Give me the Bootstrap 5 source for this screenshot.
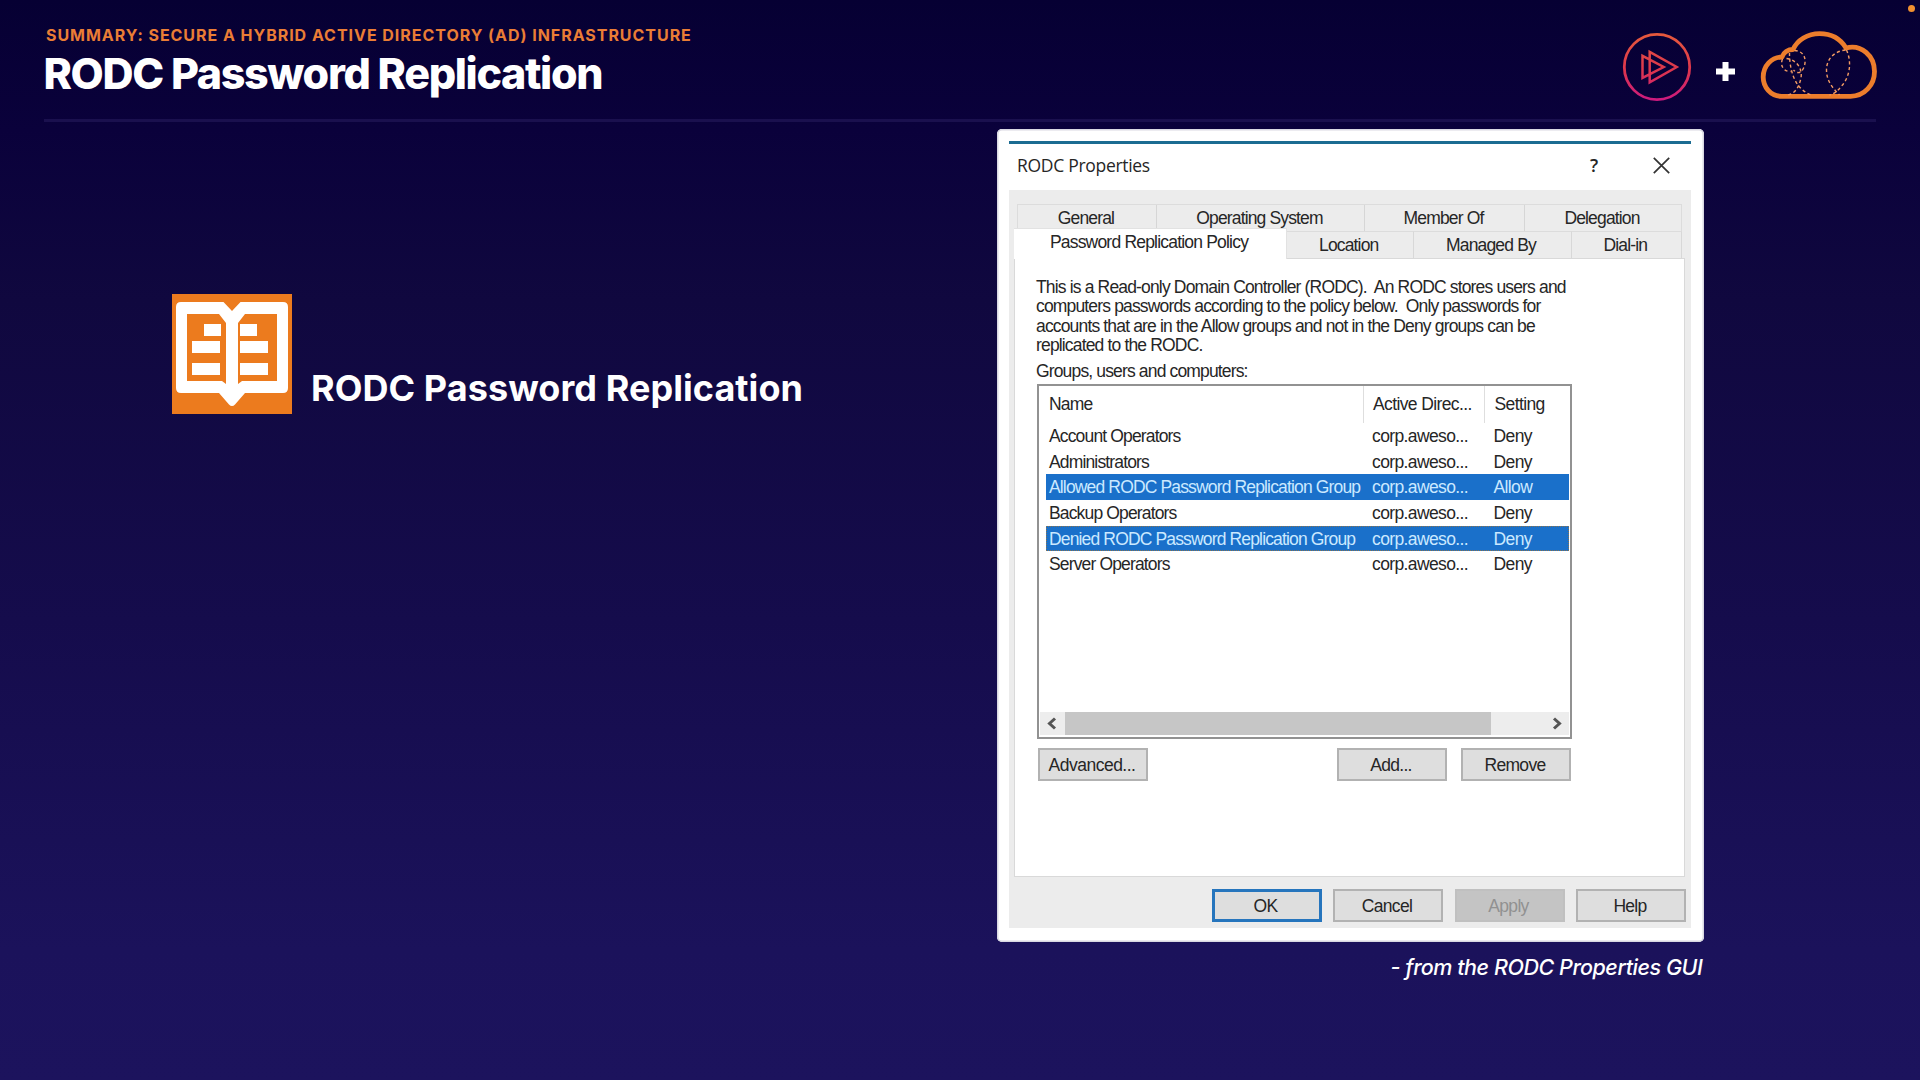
<!DOCTYPE html>
<html lang="en">
<head>
<meta charset="utf-8">
<meta name="viewport" content="width=device-width, initial-scale=1">
<title>RODC Password Replication</title>
<link href="https://cdn.jsdelivr.net/npm/bootstrap@5.3.0/dist/css/bootstrap.min.css" rel="stylesheet">
<style>
  body { margin: 0; background: #1b125b; }
  .slide { width: 1920px; height: 1080px; background: linear-gradient(#060033 0, #0a013b 130px, #10083f 300px, #150c4c 620px, #1b125b 950px, #1c135d 100%); font-family: Inter, "Liberation Sans", sans-serif; color: #fff; }
  .slide-head { height: 122px; margin: 0 44px; padding-top: 25px; border-bottom: 3px solid #1a104e; }
  .eyebrow { font-size: 16px; line-height: 20px; font-weight: 700; letter-spacing: .96px; color: #ea7d35; padding-left: 2px; }
  .slide-title { font-size: 43px; line-height: 48px; font-weight: 800; letter-spacing: -1.35px; margin: 4px 0 0 -.5px; }
  .logo-play { width: 70px; height: 70px; margin-top: 6.5px; }
  .logo-plus { width: 19px; height: 19px; margin: 36.5px 25px 0 24.5px; }
  .logo-cloud { width: 118px; height: 72px; margin-top: 3.5px; margin-right: -2px; }
  .live-dot { top: 4.5px; right: 5px; width: 7px; height: 7px; background: #f09030; border-radius: 50%; }
  .topic { padding: 172px 0 0 172px; width: 996.5px; }
  .topic-icon { width: 120px; height: 120px; background: #ec7b1e; }
  .topic h2 { font-size: 36px; line-height: 44px; font-weight: 700; letter-spacing: .06px; margin: 0 0 4.5px 19px; }
  .shot { width: 707px; margin-top: 6.5px; }
  .dialog-frame { height: 813px; background: #fff; border-radius: 5px; padding: 12.5px 12.5px 13px; box-shadow: inset 0 0 0 1.5px #d9d8e2; font-family: "Liberation Sans", sans-serif; font-size: 17.5px; letter-spacing: -.85px; color: #262626; }
  .titlebar { height: 49px; border-top: 3px solid #1b6c92; padding: 0 21px 3px 8px; font-family: "Open Sans", sans-serif; font-size: 17.5px; letter-spacing: -.3px; }
  .q-mark { font-weight: 600; font-size: 18px; margin-right: 55px; }
  .sheet { height: 738px; background: #ececec; padding: 14px 6px 0 5px; }
  .tabs-back { margin: 0 3px; height: 27px; border: 1px solid #dcdcdc; border-bottom: 0; }
  .tabs-back > div, .tabs-front > div { text-align: center; line-height: 27px; height: 27px; white-space: nowrap; padding-right: 2px; }
  .tabs-back > div + div { border-left: 1px solid #d6d6d6; }
  .tabs-front { height: 27px; margin-right: 3px; }
  .tabs-front > div { border-right: 1px solid #d8d8d8; border-top: 1px solid #dcdcdc; }
  .tabs-front > .tab-on { width: 273px; height: 31px; margin-top: -3px; background: #fff; border-color: #e2e2e2; line-height: 27px; letter-spacing: -.8px; }
  .w-general { width: 138px; } .w-os { width: 208px; } .w-member { width: 160px; } .w-location { width: 126.5px; } .w-managed { width: 158px; }
  .panel { height: 619px; background: #fff; border: 1.5px solid #d9d9d9; padding: 18.5px 0 0 22px; }
  .explain { line-height: 19.6px; white-space: pre; margin: 0 0 0 -1px; letter-spacing: -.84px; }
  .list-label { line-height: 20px; margin: 5.5px 0 0 -1px; letter-spacing: -.85px; }
  .listbox { width: 535px; height: 355px; border: 2px solid #929292; margin-top: 3px; padding: 0 1px 2px 1px; }
  .lrow { display: grid; grid-template-columns: 316.5px 121.5px 1fr; margin-left: 6px; height: 25.55px; line-height: 26.5px; white-space: nowrap; }
  .lrow > span { padding-left: 3px; }
  .lrow > span + span { padding-left: 9.5px; letter-spacing: -.62px; }
  .lhead { height: 37px; line-height: 37px; }
  .lhead > span + span { border-left: 1px solid #dedede; }
  .picked { background: #1a70ca; color: #cbe9ff; }
  .focused { outline: 1px dotted #8a7350; outline-offset: -1px; }
  .hbar { height: 23px; background: #ededed; }
  .hbar .thumb { width: 426px; background: #c6c6c6; margin-left: 25px; }
  .list-actions { width: 534px; margin-top: 8.5px; gap: 14px; padding-left: 1px; }
  .sheet-actions { gap: 11.5px; margin-top: 12px; margin-right: -1px; }
  .btn-win { width: 110px; height: 33px; padding: 0 2px 0 0; border: 2px solid #b2b2b2; border-radius: 0; background: #dedede; color: #262626; font-size: 17.5px; line-height: 30px; letter-spacing: -.7px; text-align: center; }
  .btn-wide-text { letter-spacing: -.5px; }
  .btn-ok { border: 3px solid #2675bd; line-height: 28px; }
  .btn-win.btn-off { background: #c4c4c4; border-color: #c0c0c0; color: #919191; }
  .caption-line { font-size: 21.5px; line-height: 26px; letter-spacing: -.44px; font-style: italic; font-weight: 500; margin-top: 12.5px; padding-right: 1px; }
</style>
<script src="https://cdn.jsdelivr.net/npm/bootstrap@5.3.0/dist/js/bootstrap.bundle.min.js"></script>
</head>
<body>
<div class="slide position-relative overflow-hidden">
  <span class="live-dot position-absolute"></span>
  <header class="slide-head d-flex justify-content-between align-items-start">
    <div>
      <div class="eyebrow">SUMMARY: SECURE A HYBRID ACTIVE DIRECTORY (AD) INFRASTRUCTURE</div>
      <h1 class="slide-title">RODC Password Replication</h1>
    </div>
    <div class="d-flex align-items-start">
      <svg class="logo-play" viewBox="12.3 11.7 70 70" fill="none">
        <defs><linearGradient id="pg" gradientUnits="userSpaceOnUse" x1="47" y1="13" x2="47" y2="81"><stop offset="0" stop-color="#e65a3c"/><stop offset=".55" stop-color="#dc354e"/><stop offset="1" stop-color="#cc1980"/></linearGradient></defs>
        <g stroke="url(#pg)"><circle cx="47.3" cy="46.7" r="32.7" stroke-width="2.8"/>
        <path stroke-width="2.5" d="M40 31.500V62L67 46.700ZM32.800 35.600V57.600L54 46.700Z"/></g>
      </svg>
      <svg class="logo-plus" viewBox="0 0 19 19"><path fill="#fff" d="M6.500 0h6v6.500H19v6h-6.500V19h-6v-6.500H0v-6h6.500z"/></svg>
      <svg class="logo-cloud" viewBox="10.500 9 118 72" fill="none">
        <path stroke="#ec7d2c" stroke-width="4.800" stroke-linejoin="round" d="M32 76.300C21 76.300 13.700 67 13.700 57C13.700 46 22 37 32.500 37C34 32.500 38.500 29.500 43.500 29.500C48 20 58 13.700 70 13.700C82 13.700 91 19 96.500 28C112 24 125 36 125 51.500C125 65 115 76.300 101 76.300Z"/>
        <g stroke="#f29a62" stroke-width="1.400" stroke-dasharray="3.200 2.600"><path d="M96 30C86 31 77 38 77 50C77 60 82 67 90 75"/><path d="M97 30C102 41 101 55 93 65C89 70 85 74 80 75"/><path d="M40 33C40 48 44 69 62 75"/><path d="M45 30.500C56 31 58 42 53 50C50 54 47 53 44 50"/><path d="M37 38.500C48 40 54 50 51 60C49 68 45 74 38 75"/><path d="M33 39C30 46 35 52 41 51.500"/></g>
      </svg>
    </div>
  </header>

  <main class="d-flex align-items-start">
    <section class="topic d-flex align-items-end">
      <svg class="topic-icon flex-shrink-0" viewBox="0 0 120 120">
        <path fill="#fff" d="M9 8H51.500L60 17L68.500 8H111Q116 8 116 13V94Q116 99 111 99H73L63 110.500Q60 113.500 57 110.500L47 99H9Q4 99 4 94V13Q4 8 9 8Z"/>
        <path fill="#ec7b1e" d="M15 20H47L54 29V90L50 87H15ZM105 20H73L66 29V90L70 87H105Z"/>
        <path fill="#fff" d="M32 30h17v12H32zM20 47h28v12H20zM20 69h28v12H20zM68 30h17v12H68zM68 47h28v12H68zM68 69h28v12H68z"/>
      </svg>
      <h2>RODC Password Replication</h2>
    </section>

    <section class="shot">
      <div class="dialog-frame">
        <div class="titlebar d-flex align-items-center">
          <span class="me-auto">RODC Properties</span>
          <span class="q-mark">?</span>
          <svg width="17" height="17" viewBox="0 0 17 17"><path d="M.8.8L16.200 16.200M16.200.8L.8 16.200" stroke="#333" stroke-width="1.700"/></svg>
        </div>
        <div class="sheet">
          <div class="tabs-back d-flex">
            <div class="w-general">General</div><div class="w-os">Operating System</div><div class="w-member">Member Of</div><div class="flex-fill">Delegation</div>
          </div>
          <div class="tabs-front d-flex">
            <div class="tab-on">Password Replication Policy</div><div class="w-location">Location</div><div class="w-managed">Managed By</div><div class="flex-fill">Dial-in</div>
          </div>
          <div class="panel">
            <p class="explain">This is a Read-only Domain Controller (RODC).  An RODC stores users and
computers passwords according to the policy below.  Only passwords for
accounts that are in the Allow groups and not in the Deny groups can be
replicated to the RODC.</p>
            <div class="list-label">Groups, users and computers:</div>
            <div class="listbox d-flex flex-column">
              <div class="lrow lhead"><span>Name</span><span>Active Direc...</span><span>Setting</span></div>
              <div class="lrow"><span>Account Operators</span><span>corp.aweso...</span><span>Deny</span></div>
              <div class="lrow"><span>Administrators</span><span>corp.aweso...</span><span>Deny</span></div>
              <div class="lrow picked"><span>Allowed RODC Password Replication Group</span><span>corp.aweso...</span><span>Allow</span></div>
              <div class="lrow"><span>Backup Operators</span><span>corp.aweso...</span><span>Deny</span></div>
              <div class="lrow picked focused"><span>Denied RODC Password Replication Group</span><span>corp.aweso...</span><span>Deny</span></div>
              <div class="lrow"><span>Server Operators</span><span>corp.aweso...</span><span>Deny</span></div>
              <div class="hbar d-flex mt-auto position-relative">
                <svg class="position-absolute start-0 top-0" width="25" height="23" viewBox="0 0 25 23"><path d="M15 6.500L9.500 11.500L15 16.500" fill="none" stroke="#555" stroke-width="3"/></svg>
                <div class="thumb"></div>
                <svg class="position-absolute end-0 top-0" width="25" height="23" viewBox="0 0 25 23"><path d="M10 6.500L15.500 11.500L10 16.500" fill="none" stroke="#555" stroke-width="3"/></svg>
              </div>
            </div>
            <div class="list-actions d-flex">
              <div class="btn-win btn-wide-text me-auto">Advanced...</div>
              <div class="btn-win">Add...</div>
              <div class="btn-win">Remove</div>
            </div>
          </div>
          <div class="sheet-actions d-flex justify-content-end">
            <div class="btn-win btn-ok">OK</div>
            <div class="btn-win">Cancel</div>
            <div class="btn-win btn-off">Apply</div>
            <div class="btn-win">Help</div>
          </div>
        </div>
      </div>
      <div class="caption-line text-end">- from the RODC Properties GUI</div>
    </section>
  </main>
</div>
</body>
</html>
